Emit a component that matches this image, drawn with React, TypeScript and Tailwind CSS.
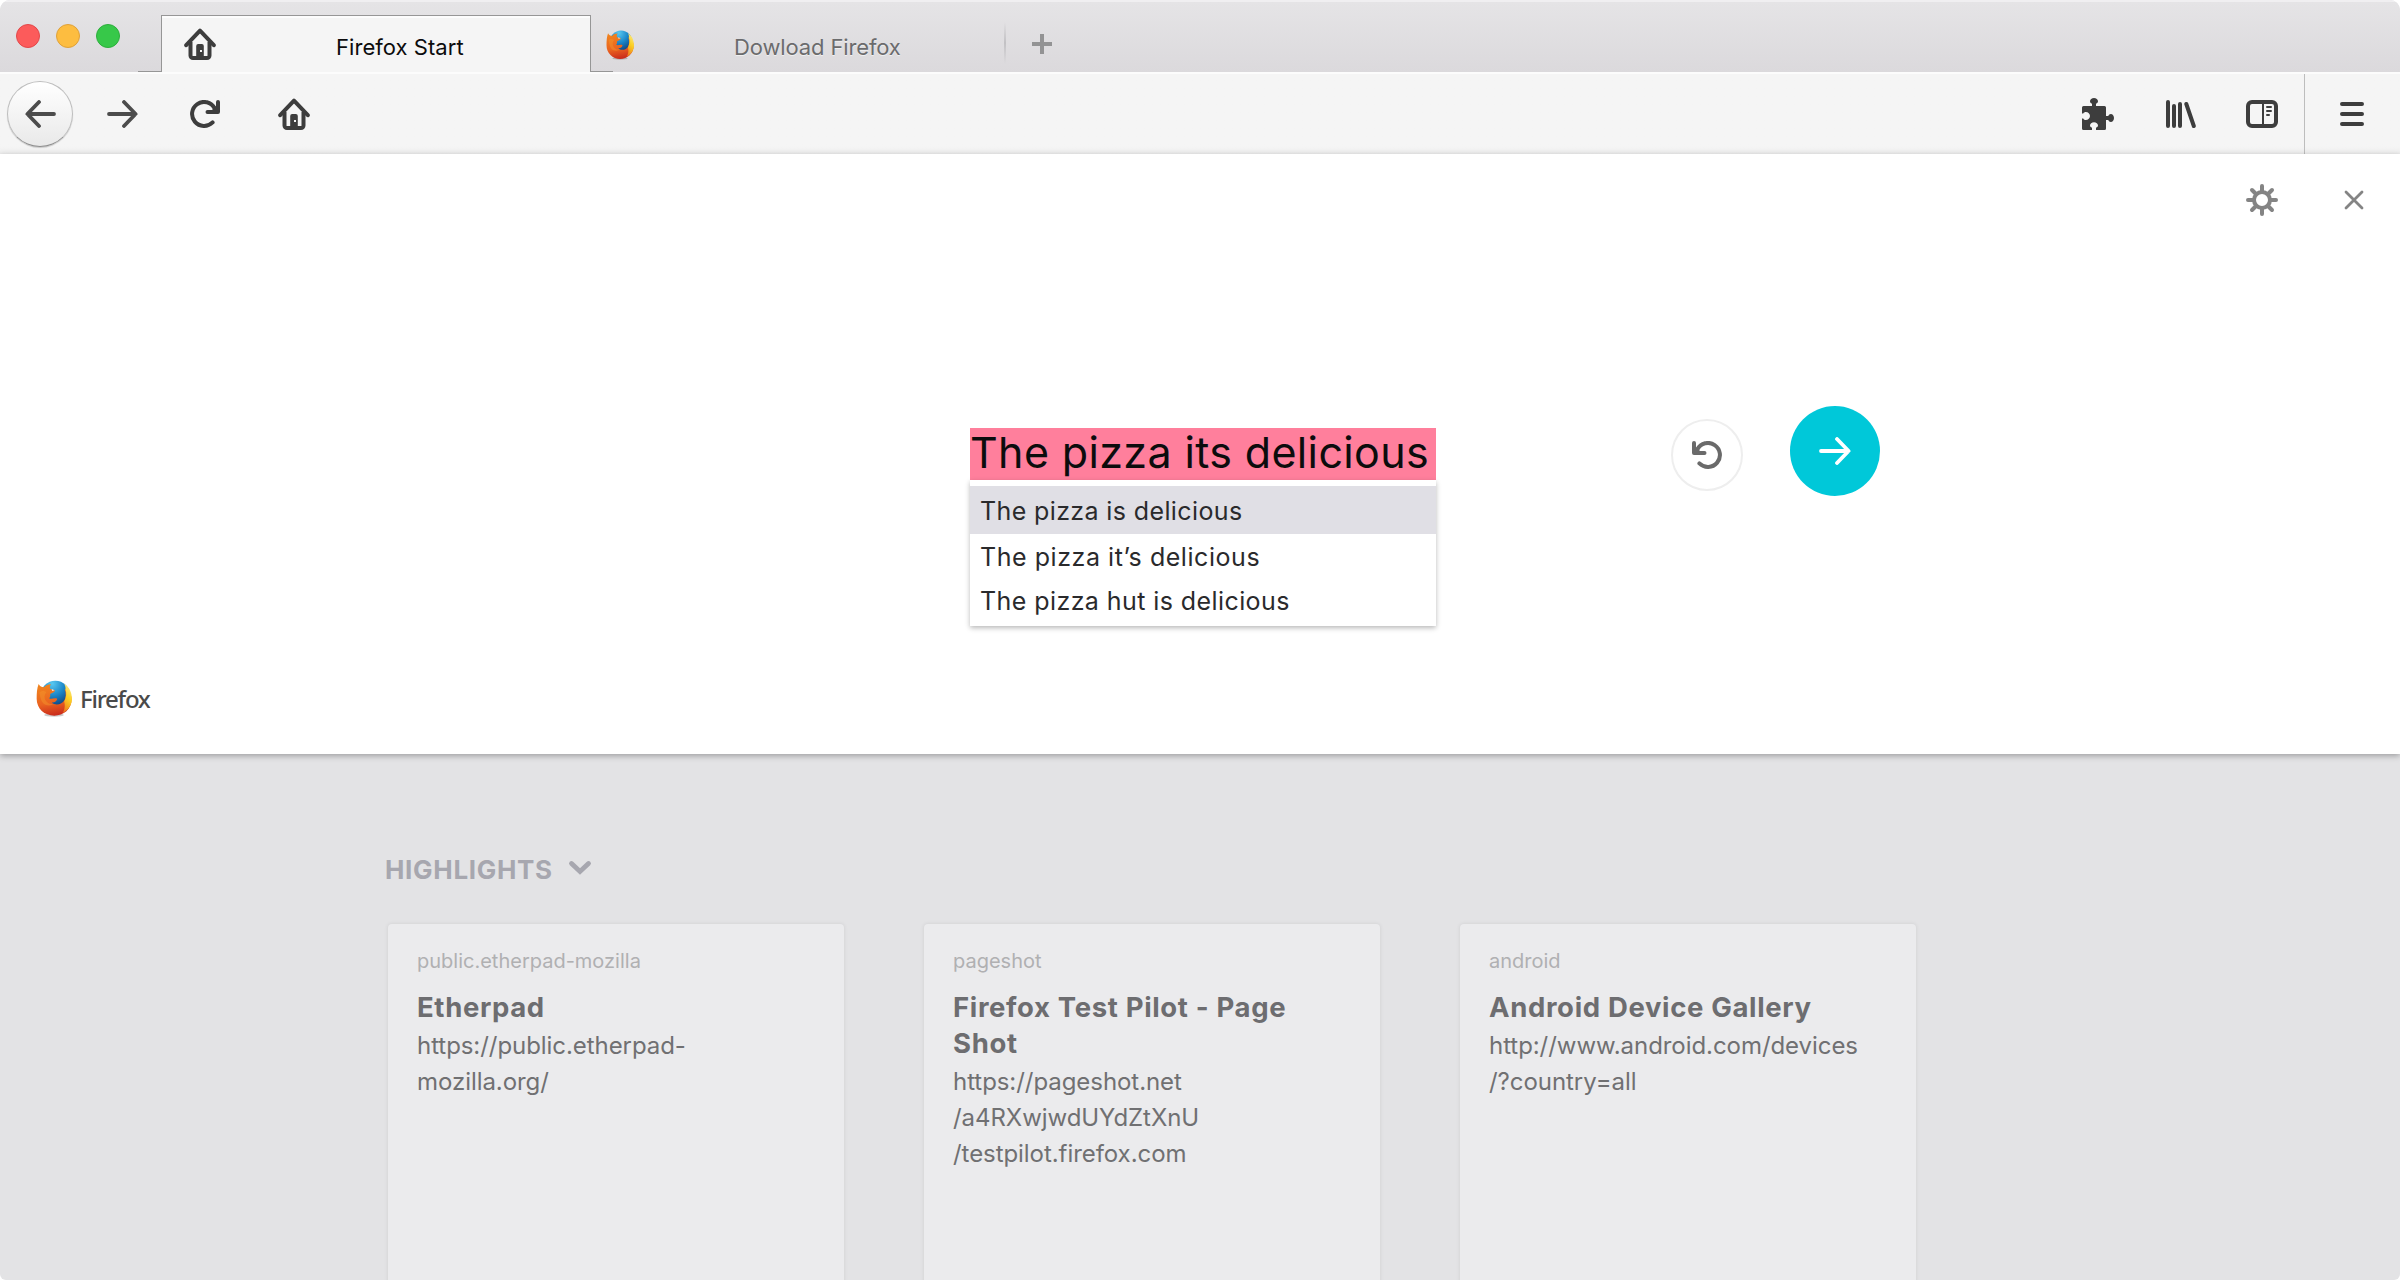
import React from "react";

function HomeIcon() {
  return (
    <svg width="32" height="32" viewBox="0 0 32 32" fill="none" className="shrink-0">
      <path d="M2.2 17.2L16 2.6l13.8 14.6" stroke="#3d3d3d" strokeWidth="4" strokeLinecap="round" strokeLinejoin="round" />
      <path d="M6.5 14v13.5a2.5 2.5 0 0 0 2.5 2.5h14a2.5 2.5 0 0 0 2.5-2.5V14" stroke="#3d3d3d" strokeWidth="4" />
      <path d="M12.2 28V18a2 2 0 0 1 2-2h3.6a2 2 0 0 1 2 2v10z" fill="#3d3d3d" />
      <rect x="16" y="22" width="2" height="2" fill="#f5f5f5" />
    </svg>
  );
}

function ArrowIcon({ className, flip, color, size }: { className?: string; flip?: boolean; color: string; size: number }) {
  return (
    <svg width={size} height="28" viewBox={`0 0 ${size} 28`} fill="none" className={className}>
      <g transform={flip ? `translate(${size} 0) scale(-1 1)` : undefined}>
        <path d={`M2 14H${size - 2.6}M${size - 14} 2L${size - 2.4} 14L${size - 14} 26`} stroke={color} strokeWidth="3.8" strokeLinecap="round" strokeLinejoin="round" />
      </g>
    </svg>
  );
}

function ReloadIcon({ color, flip }: { color: string; flip?: boolean }) {
  return (
    <svg width="30" height="28" viewBox="0 0 30 28" fill="none">
      <g transform={flip ? "translate(30 0) scale(-1 1)" : undefined}>
        <path d="M22.6 22.4A12 12 0 1 1 24.6 8.2" stroke={color} strokeWidth="4" strokeLinecap="round" />
        <path d="M28 2v10H17.5" stroke={color} strokeWidth="4" strokeLinecap="round" strokeLinejoin="round" />
        <path d="M28 4v8h-8z" fill={color} />
      </g>
    </svg>
  );
}

function PuzzleIcon() {
  return (
    <svg width="32" height="32" viewBox="0 0 32 32" fill="#3d3d3d">
      <path d="M1.5 8H10V5.8C8.700 5.200 8 4.300 8 3.200 8 1.300 9.800 0 12 0s4 1.300 4 3.200c0 1.100-.7 2-2 2.600V8h8.500A1.500 1.500 0 0 1 24 9.500V18h2.200c.6-1.300 1.500-2 2.600-2C30.700 16 32 17.800 32 20s-1.300 4-3.200 4c-1.100 0-2-.7-2.600-2H24v8.500a1.500 1.500 0 0 1-1.500 1.500H14v-2.200c1.300-.6 2-1.400 2-2.300 0-2-1.800-3.300-4-3.300s-4 1.300-4 3.300c0 .9.700 1.700 2 2.300V32H1.500A1.500 1.500 0 0 1 0 30.500V20.500h1.200c.6 1 1.600 1.500 2.600 1.500C6.200 22 8 20.300 8 18s-1.800-4-4.200-4c-1 0-2 .5-2.600 1.500H0v-6A1.500 1.500 0 0 1 1.500 8z" />
    </svg>
  );
}

function LibraryIcon() {
  return (
    <svg width="30" height="28" viewBox="0 0 30 28" stroke="#3d3d3d" strokeWidth="4" strokeLinecap="round">
      <path d="M2 2v24M8 6v20M14 4v22M20.300 4L27.800 26" />
    </svg>
  );
}

function SidebarIcon() {
  return (
    <svg width="32" height="28" viewBox="0 0 32 28" fill="none" stroke="#3d3d3d">
      <rect x="2" y="2" width="28" height="24" rx="4" strokeWidth="4" />
      <path d="M17 3v22" strokeWidth="2" />
      <path d="M21 7h4M21 11h4M21 15h2" strokeWidth="2" strokeLinecap="round" />
    </svg>
  );
}

function MenuIcon() {
  return (
    <svg width="24" height="24" viewBox="0 0 24 24" stroke="#3d3d3d" strokeWidth="4" strokeLinecap="round">
      <path d="M2 2h20M2 12h20M2 22h20" />
    </svg>
  );
}

function GearIcon() {
  return (
    <svg width="32" height="32" viewBox="0 0 32 32" fill="none" stroke="#848484" strokeWidth="4" strokeLinecap="round">
      <circle cx="16" cy="16" r="8" />
      <path d="M16 2v5M16 25v5M2 16h5M25 16h5M6 6l4 4M22 22l4 4M26 6l-4 4M10 22l-4 4" />
    </svg>
  );
}

function CloseIcon() {
  return (
    <svg width="20" height="20" viewBox="0 0 20 20" stroke="#848484" strokeWidth="2.800" strokeLinecap="round">
      <path d="M2 2l16 16M18 2L2 18" />
    </svg>
  );
}

function FirefoxLogo({ id, width, height }: { id: string; width: number; height: number }) {
  return (
    <svg width={width} height={height} viewBox="18 23 110 112" preserveAspectRatio="none" className="shrink-0">
      <defs>
        <radialGradient id={`${id}-globe`} cx="0.4" cy="0.1" r="0.9">
          <stop offset="0" stopColor="#58c8f0" />
          <stop offset="0.45" stopColor="#1b87c9" />
          <stop offset="1" stopColor="#0a2a66" />
        </radialGradient>
        <linearGradient id={`${id}-fox`} x1="0.3" y1="0" x2="0.5" y2="1">
          <stop offset="0" stopColor="#f0841f" />
          <stop offset="0.6" stopColor="#ea6320" />
          <stop offset="1" stopColor="#c92a1c" />
        </linearGradient>
        <linearGradient id={`${id}-tail`} x1="0.6" y1="0" x2="0.3" y2="1">
          <stop offset="0" stopColor="#fbe98a" />
          <stop offset="0.45" stopColor="#fbd022" />
          <stop offset="1" stopColor="#ee7a1e" />
        </linearGradient>
      </defs>
      <ellipse cx="73" cy="129" rx="30" ry="5" fill="#000" opacity="0.2" />
      <circle cx="77" cy="70" r="45" fill={`url(#${id}-globe)`} />
      <path
        d="M26 35C30 42 35 44 42 45C48 39 55 36 64 36C60 41 59 46 62 50C67 53 74 51 76 55C75 61 66 62 61 66C63 71 61 75 58 78C66 83 74 75 83 80C82 87 74 92 66 91C77 101 95 98 104 86C110 77 110 63 106 50C118 56 127 68 127 80C127 112 102 131 74 131C44 131 20 110 20 80C20 62 21 48 26 35Z"
        fill={`url(#${id}-fox)`}
      />
      <path d="M28 62C34 54 44 56 50 60C44 66 42 76 48 86C54 95 64 97 74 96C60 104 42 100 36 88C31 79 31 70 28 62Z" fill="#f5962d" opacity="0.45" />
      <path d="M104 35C119 43 127 58 128 80C127 100 116 115 100 123C107 108 107 98 104 88C111 76 112 62 108 52C109 45 107 40 104 35Z" fill={`url(#${id}-tail)`} />
      <path d="M66 50l9 4-8 2z" fill="#fff" opacity="0.8" />
    </svg>
  );
}

type Highlight = { site: string; title: string[]; url: string[] };

const highlights: Highlight[] = [
  { site: "public.etherpad-mozilla", title: ["Etherpad"], url: ["https://public.etherpad-", "mozilla.org/"] },
  {
    site: "pageshot",
    title: ["Firefox Test Pilot - Page", "Shot"],
    url: ["https://pageshot.net", "/a4RXwjwdUYdZtXnU", "/testpilot.firefox.com"],
  },
  { site: "android", title: ["Android Device Gallery"], url: ["http://www.android.com/devices", "/?country=all"] },
];

function TabBar() {
  return (
    <div className="flex h-[72px] shrink-0 border-t-2 border-[#f0eff1] bg-linear-to-b from-[#e5e4e6] to-[#dbd9dc]">
      <div className="flex h-[68px] w-[138px] items-center gap-4 pl-4">
        <span className="size-6 rounded-full border border-[#e2484a] bg-[#fc5b5b]" />
        <span className="size-6 rounded-full border border-[#dfa13a] bg-[#fdbd40]" />
        <span className="size-6 rounded-full border border-[#2dae3c] bg-[#37c849]" />
      </div>
      <div className="w-[23px] border-b border-[#969696]" />
      <div className="mt-[13px] flex h-[57px] w-[430px] border border-b-0 border-[#969696] bg-[#f5f5f5] pl-[22px] shadow-[inset_0_2px_0_#fcfcfc]">
        <div className="pt-3"><HomeIcon /></div>
        <div className="ml-[120px] pt-4 text-[22px] leading-[30px] tracking-[0.05px] whitespace-nowrap text-[#0c0c0d]">Firefox Start</div>
      </div>
      <div className="flex w-[22px] border-b border-[#969696] pt-7 pl-[15px]">
        <FirefoxLogo id="tab" width={28} height={30} />
      </div>
      <div className="ml-[121px] pt-[30px] text-[22px] leading-[30px] tracking-[-0.13px] whitespace-nowrap text-[#6b6b6d] [text-shadow:0_1px_0_#f0f0f0]">
        Dowload Firefox
      </div>
      <div className="ml-auto flex w-[1396px] pt-5">
        <div className="h-[42px] w-0.5 bg-linear-to-b from-transparent via-[#c2c1c4] to-transparent" />
        <svg width="20" height="20" viewBox="0 0 20 20" className="mt-3 ml-[26px]" fill="#939394">
          <path d="M8 0h4v8h8v4h-8v8H8v-8H0V8h8z" />
        </svg>
      </div>
    </div>
  );
}

function Toolbar() {
  return (
    <div className="flex h-[82px] shrink-0 items-center border-t-2 border-[#fcfcfc] bg-linear-to-b from-[#f5f5f5] from-90% to-[#eeeeee]">
      <div className="ml-[7px] flex size-[66px] items-center justify-center rounded-full border border-[#bdbdbd] border-b-[#8e8e8e] bg-linear-to-b from-white to-[#e9e9e9] shadow-[0_1px_1px_rgba(0,0,0,0.18)]">
        <ArrowIcon flip color="#4c4c4c" size={31} />
      </div>
      <ArrowIcon color="#4c4c4c" size={31} className="ml-[34px]" />
      <div className="ml-[52px]"><ReloadIcon color="#3d3d3d" /></div>
      <div className="ml-[58px]"><HomeIcon /></div>
      <div className="ml-auto flex h-full items-center">
        <PuzzleIcon />
        <div className="ml-[52px]"><LibraryIcon /></div>
        <div className="ml-[50px]"><SidebarIcon /></div>
        <div className="ml-[26px] flex h-full w-24 items-center border-l border-[#bdbdbd] pl-[35px]"><MenuIcon /></div>
      </div>
    </div>
  );
}

function VoicePanel() {
  return (
    <section className="relative z-10 flex h-[600px] shrink-0 flex-col bg-white shadow-[0_2px_6px_rgba(0,0,0,0.3)]">
      <div className="flex h-[62px] items-end justify-end gap-[66px] pr-9">
        <GearIcon />
        <div className="pb-1.5"><CloseIcon /></div>
      </div>
      <div className="flex h-[300px] pt-[190px] pl-[970px]">
        <div className="mt-[22px] w-[466px]">
          <div className="h-[52px] bg-[#ff7f9c] text-[43px] leading-[48px] tracking-[0.36px] whitespace-nowrap text-[#0c0c0d]">
            The pizza its delicious
          </div>
          <ul className="h-[146px] bg-white pt-1.5 text-[25px] text-[#2a2a2c] shadow-[0_2px_5px_rgba(0,0,0,0.28)]">
            <li className="flex h-12 items-center bg-[#e0dfe5] pt-1 pl-2.5 tracking-[0.38px]">The pizza is delicious</li>
            <li className="flex h-[45px] items-center pt-[3px] pl-2.5 tracking-[0.55px]">The pizza it’s delicious</li>
            <li className="flex h-11 items-center pt-0.5 pl-2.5 tracking-[0.42px]">The pizza hut is delicious</li>
          </ul>
        </div>
        <div className="mt-[13px] ml-[235px] flex size-[72px] items-center justify-center rounded-full border-2 border-[#eeeeee]">
          <ReloadIcon flip color="#6a6a6a" />
        </div>
        <div className="ml-[47px] flex size-[90px] items-center justify-center rounded-full bg-[#00c8d9]">
          <ArrowIcon color="#ffffff" size={32} />
        </div>
      </div>
      <div className="mt-auto flex h-[74px] gap-2 pl-9">
        <FirefoxLogo id="brand" width={36} height={37} />
        <div className="pt-1 font-['Noto_Sans'] text-[24px] leading-[30px] font-medium tracking-[-1.25px] text-[#4a4a4a]">Firefox</div>
      </div>
    </section>
  );
}

function HighlightCard({ item }: { item: Highlight }) {
  return (
    <article className="h-[380px] w-[456px] rounded-[4px] bg-[#ebebed] px-[29px] pt-[23px] whitespace-nowrap shadow-[0_0_4px_rgba(0,0,0,0.09)]">
      <p className="text-[20px] leading-7 text-[#b0b0b2]">{item.site}</p>
      <h3 className="mt-3.5 text-[27.5px] leading-9 font-bold tracking-[0.65px] text-[#6d6d70]">
        {item.title.map((line) => <span key={line} className="block">{line}</span>)}
      </h3>
      <p className="mt-[3px] text-[24px] leading-9 tracking-[-0.06px] text-[#707072]">
        {item.url.map((line) => <span key={line} className="block">{line}</span>)}
      </p>
    </article>
  );
}

export default function App() {
  return (
    <div className="h-[1280px] w-[2400px] overflow-hidden bg-white font-['Inter',sans-serif]">
      <div className="flex h-full flex-col overflow-hidden rounded-t-[10px] rounded-b-[6px] bg-[#e3e3e5]">
        <TabBar />
        <Toolbar />
        <VoicePanel />
        <main className="h-0 grow overflow-hidden pt-[100px] pl-[385px]">
          <div className="flex h-8 items-center gap-[15px]">
            <h2 className="text-[26px] leading-8 font-bold tracking-[0.68px] text-[#a7a7af]">HIGHLIGHTS</h2>
            <svg width="24" height="16" viewBox="0 0 24 16" fill="none" className="-mt-1">
              <path d="M3.500 3.500L12 11.500L20.500 3.500" stroke="#a7a7af" strokeWidth="4.800" strokeLinecap="round" />
            </svg>
          </div>
          <div className="mt-[38px] ml-[3px] flex gap-20">
            {highlights.map((item) => <HighlightCard key={item.site} item={item} />)}
          </div>
        </main>
      </div>
    </div>
  );
}
